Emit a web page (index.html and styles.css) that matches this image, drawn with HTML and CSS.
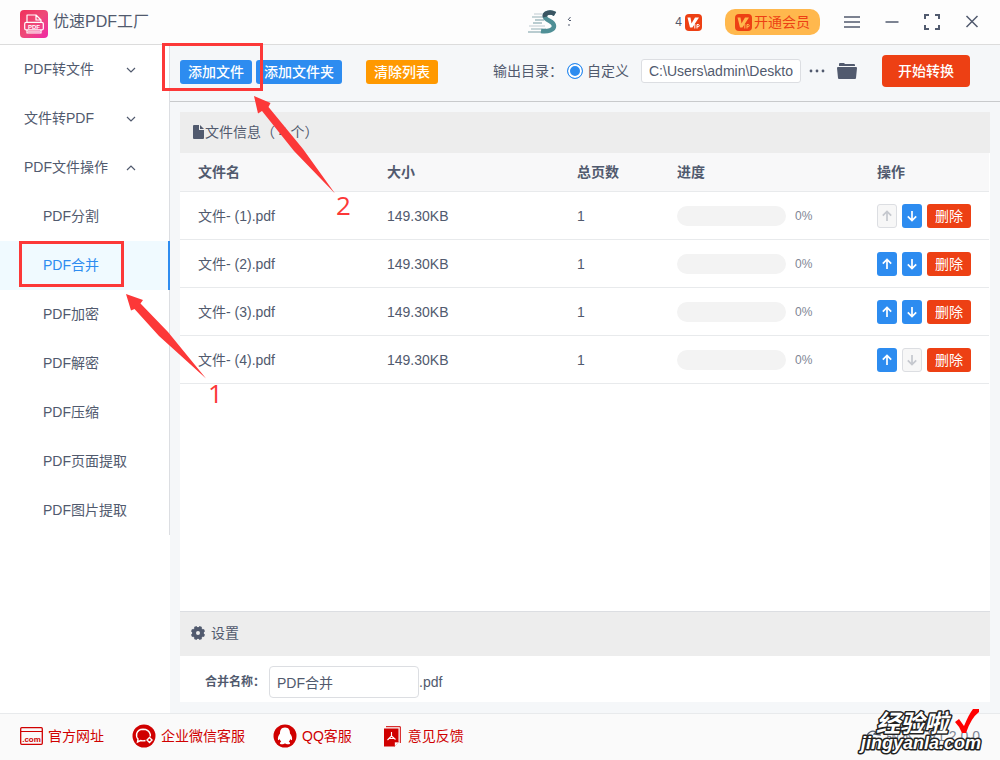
FILE: index.html
```html
<!DOCTYPE html>
<html lang="zh-CN">
<head>
<meta charset="utf-8">
<meta name="viewport" content="width=device-width, initial-scale=1">
<title>优速PDF工厂</title>
<link rel="stylesheet" href="styles.css">
</head>
<body>
<svg class="defs" aria-hidden="true">
  <symbol id="up" viewBox="0 0 12 12"><path d="M6 11V1.5M1.8 5.6L6 1.4l4.2 4.2" fill="none" stroke="currentColor" stroke-width="1.7"/></symbol>
  <symbol id="down" viewBox="0 0 12 12"><path d="M6 1v9.5M1.8 6.4L6 10.6l4.2-4.2" fill="none" stroke="currentColor" stroke-width="1.7"/></symbol>
  <symbol id="chev" viewBox="0 0 10 10"><path d="M1 3l4 4 4-4" fill="none" stroke="currentColor" stroke-width="1.2"/></symbol>
  <symbol id="vip" viewBox="0 0 17 17"><rect width="17" height="17" rx="4" fill="#ed4014"/><path d="M2.500 3.500h3l1 6 3.500-6h4L7.400 13.600H5z" fill="currentColor"/><path d="M9.800 10v4.500M12 14.500V10.500h1.200a1 1 0 0 1 0 2.200H12" fill="none" stroke="currentColor" stroke-width="1"/></symbol>
</svg>
<div class="app">
  <header class="titlebar">
    <svg class="logo" viewBox="0 0 28 28">
      <defs><linearGradient id="lg" x1="0" y1="0" x2="1" y2="1"><stop offset="0" stop-color="#f0305a"/><stop offset=".5" stop-color="#ee4a78"/><stop offset="1" stop-color="#f028a8"/></linearGradient></defs>
      <rect width="28" height="28" rx="4" fill="url(#lg)"/>
      <g fill="none" stroke="#fff" stroke-width="1.2" stroke-linejoin="round"><path d="M7 12V5h9l5 5v2M16 5v5h5"/><rect x="4.700" y="12.300" width="18.600" height="7.600" rx="1.500"/><path d="M7 20v3h14v-3"/><path d="M8 21.700h12" stroke-opacity=".7"/></g>
      <text x="14" y="18.500" class="logo-text">PDF</text>
    </svg>
    <h1 class="app-name">优速PDF工厂</h1>
    <div class="user">
      <svg class="avatar" viewBox="0 0 30 26">
        <g stroke-width="1.500"><path d="M6 5h12M1 17h16" stroke="#d3dce0"/><path d="M4 8h12M3 20h15" stroke="#b7c9cd"/><path d="M7 11h9M5 14h9M0 23h20" stroke="#a3bcc1"/></g>
        <path d="M27 5c-5-3-11-1-10 3 1 4 9 4 9 9 0 4-6 6-13 5" fill="none" stroke="#4f8f96" stroke-width="4.500"/>
        <path d="M27 5c-5-3-11-1-10 3" fill="none" stroke="#3a5562" stroke-width="4.500"/>
      </svg>
      <svg class="name-mark" viewBox="0 0 4 12"><path d="M3.500 1L1 4M2 4.500h2M2 8v2" stroke="#515a6e" fill="none"/></svg>
      <span class="user-end">4</span>
      <svg class="vip white"><use href="#vip"/></svg>
    </div>
    <button class="member"><svg class="vip"><use href="#vip"/></svg>开通会员</button>
    <div class="window-tools">
      <button class="tool" aria-label="菜单"><svg viewBox="0 0 16 16"><path d="M0 3h16M0 8h16M0 13h16"/></svg></button>
      <button class="tool" aria-label="最小化"><svg viewBox="0 0 16 16"><path d="M1.500 8h13"/></svg></button>
      <button class="tool" aria-label="最大化"><svg class="thick" viewBox="0 0 16 16"><path d="M1 5V1h4M11 1h4v4M15 11v4h-4M5 15H1v-4"/></svg></button>
      <button class="tool" aria-label="关闭"><svg viewBox="0 0 16 16"><path d="M2.500 2l11 11M13.500 2l-11 11"/></svg></button>
    </div>
  </header>

  <div class="main">
    <nav class="side">
      <div class="menu">
        <a href="#" class="group">PDF转文件<svg><use href="#chev"/></svg></a>
        <a href="#" class="group">文件转PDF<svg><use href="#chev"/></svg></a>
        <a href="#" class="group open">PDF文件操作<svg><use href="#chev"/></svg></a>
        <a href="#" class="item">PDF分割</a>
        <a href="#" class="item active">PDF合并</a>
        <a href="#" class="item">PDF加密</a>
        <a href="#" class="item">PDF解密</a>
        <a href="#" class="item">PDF压缩</a>
        <a href="#" class="item">PDF页面提取</a>
        <a href="#" class="item">PDF图片提取</a>
      </div>
    </nav>

    <main class="work">
      <div class="toolbar">
        <div class="actions">
          <button class="btn blue">添加文件</button>
          <button class="btn blue">添加文件夹</button>
          <button class="btn orange">清除列表</button>
        </div>
        <div class="output">
          <span>输出目录：</span>
          <label class="custom"><input type="radio" name="out" checked>自定义</label>
          <input class="path" type="text" aria-label="输出目录" value="C:\Users\admin\Deskto">
          <button class="tool dots" aria-label="更多"><svg viewBox="0 0 16 16"><circle cx="2" cy="8" r="1.400"/><circle cx="8" cy="8" r="1.400"/><circle cx="14" cy="8" r="1.400"/></svg></button>
          <button class="tool folder" aria-label="打开文件夹"><svg viewBox="0 0 20 18"><path d="M2 4V2q0-1 1-1h4l1 1h9q1 0 1 1v1z"/><path d="M1 5h18q1 0 1 1l-1 10q0 1-1 1H2q-1 0-1-1L0 6q0-1 1-1z"/></svg></button>
        </div>
        <button class="start">开始转换</button>
      </div>

      <div class="panel">
        <h2 class="panel-title"><svg viewBox="0 0 11 14"><path d="M1 0h5v5h5v8q0 1-1 1H1q-1 0-1-1V1q0-1 1-1z"/><path d="M7 0l4 4H7z"/></svg>文件信息（ 4 个）</h2>
        <div class="list">
          <table>
            <colgroup><col class="c-name"><col class="c-size"><col class="c-pages"><col class="c-progress"><col></colgroup>
            <thead><tr><th>文件名</th><th>大小</th><th>总页数</th><th>进度</th><th>操作</th></tr></thead>
            <tbody>
              <tr><td>文件- (1).pdf</td><td>149.30KB</td><td>1</td><td><div class="progress"><span class="bar"></span>0%</div></td><td><div class="ops"><button class="move" disabled aria-label="上移"><svg><use href="#up"/></svg></button><button class="move" aria-label="下移"><svg><use href="#down"/></svg></button><button class="del">删除</button></div></td></tr>
              <tr><td>文件- (2).pdf</td><td>149.30KB</td><td>1</td><td><div class="progress"><span class="bar"></span>0%</div></td><td><div class="ops"><button class="move" aria-label="上移"><svg><use href="#up"/></svg></button><button class="move" aria-label="下移"><svg><use href="#down"/></svg></button><button class="del">删除</button></div></td></tr>
              <tr><td>文件- (3).pdf</td><td>149.30KB</td><td>1</td><td><div class="progress"><span class="bar"></span>0%</div></td><td><div class="ops"><button class="move" aria-label="上移"><svg><use href="#up"/></svg></button><button class="move" aria-label="下移"><svg><use href="#down"/></svg></button><button class="del">删除</button></div></td></tr>
              <tr><td>文件- (4).pdf</td><td>149.30KB</td><td>1</td><td><div class="progress"><span class="bar"></span>0%</div></td><td><div class="ops"><button class="move" aria-label="上移"><svg><use href="#up"/></svg></button><button class="move" disabled aria-label="下移"><svg><use href="#down"/></svg></button><button class="del">删除</button></div></td></tr>
            </tbody>
          </table>
        </div>
        <h2 class="panel-title settings"><svg viewBox="0 0 16 16"><circle cx="8" cy="8" r="4" fill="none" stroke="#515a6e" stroke-width="4"/><path d="M8 8m-2.700-6.500L6.300 4M10.700 1.500L9.700 4M14.500 5.300L12 6.300M14.500 10.700L12 9.700M10.700 14.500L9.700 12M5.300 14.500L6.300 12M1.500 10.700L4 9.700M1.500 5.300L4 6.300" fill="none" stroke="#515a6e" stroke-width="2.800"/></svg>设置</h2>
        <div class="form">
          <label for="merge">合并名称：</label>
          <input id="merge" type="text" value="PDF合并"><span>.pdf</span>
        </div>
      </div>
    </main>
  </div>

  <footer class="foot">
    <a href="#" class="site"><svg viewBox="0 0 23 18"><rect x=".700" y=".700" width="21.600" height="16.600" rx="1" fill="none" stroke="#d00000" stroke-width="1.300"/><path d="M1 4.500h21" stroke="#d00000"/><text x="11.500" y="14.500" class="com">.com</text></svg>官方网址</a>
    <a href="#" class="wechat"><svg viewBox="0 0 24 24"><circle cx="12" cy="12" r="11.500" fill="#d00000"/><g fill="none" stroke="#fff" stroke-width="1.400"><path d="M13.500 16.500q-2.500.800-5 0L5.500 18l.500-3Q4 13 4.700 9.500 6 5.500 11 5.300q6 0 7.300 5.200v2"/><path d="M17.500 13.500l2.500 2.500-2.500 2.500-2.500-2.500z"/></g></svg>企业微信客服</a>
    <a href="#" class="qq"><svg viewBox="0 0 24 24"><circle cx="12" cy="12" r="11.500" fill="#d00000"/><path d="M12 3.500c-4 0-5 3-5 6-1.500 2-2.500 4-2 6.500.600.500 1.200-.300 1.700-1 .300 1 .800 2 1.500 2.700-1 .500-1.500 1-1.200 2 1.500 1 4 .500 5-.500 1 1 3.500 1.500 5 .500.300-1-.200-1.500-1.200-2 .700-.700 1.200-1.700 1.500-2.700.500.700 1.100 1.500 1.700 1 .500-2.500-.500-4.500-2-6.500 0-3-1-6-5-6z" fill="#fff"/></svg>QQ客服</a>
    <a href="#" class="feedback"><svg viewBox="0 0 17 21"><path d="M2 .700h14.300V17" fill="none" stroke="#d00000"/><path d="M0 2.500h14.500V16l-4 4.500H0z" fill="#d00000"/><path d="M10.500 20.500V16h4" fill="#fff" stroke="#d00000" stroke-width=".700"/><path d="M7.500 6v4L3.500 14M7.500 10l4 3.500M5 12.500h5" fill="none" stroke="#fff" stroke-width="1.100"/></svg>意见反馈</a>
    <span class="version"><svg viewBox="0 0 16 16"><path d="M1 9a6 6 0 0 1 9-5l-2 2 6 1-1-6-2 2" fill="none" stroke="#515a6e" stroke-width="1.300"/></svg>版本：V1.2.0.0</span>
  </footer>
</div>

<svg class="overlay annotations" width="400" height="420" aria-hidden="true">
  <g fill="none" stroke="#fc3838" stroke-width="3"><rect x="163.500" y="44.500" width="98" height="45"/><rect x="20.500" y="242.500" width="102" height="43"/></g>
  <path d="M254 96l16.500 7-2 4L303 149l32 44.500L294 151 262 111l-4 2.500zM126 294l17 6-2.500 3.500L168 332l38 46.500L159 336 134.500 309l-3.500 1.500z" fill="#fc3838"/>
  <text x="336" y="215">2</text><text x="208" y="403">1</text>
</svg>
<svg class="overlay watermark" width="136" height="56" viewBox="0 0 136 56" aria-hidden="true">
  <text class="cn" x="16" y="28">经验啦</text>
  <text class="domain" x="1" y="45">jingyanla.com</text>
  <path d="M95 18l4-3 5 7q5-12 9-17h6v3q-8 6-13 21h-4q-2-6-7-11z" fill="#f00"/>
</svg>
</body>
</html>
```
FILE: styles.css
```css
* { box-sizing: border-box; }
body {
  margin: 0;
  font: 14px/20px "Liberation Sans", "Noto Sans CJK SC", sans-serif;
  color: #515a6e;
  background: #fff;
}
button, input { font: inherit; color: inherit; }
button { border: 0; padding: 0; background: none; cursor: pointer; }
a { color: inherit; text-decoration: none; }
h1, h2 { margin: 0; font-weight: 400; }
svg { flex: none; display: block; }
.defs { position: absolute; width: 0; height: 0; }
.app { display: flex; flex-direction: column; min-height: 100vh; }

.titlebar {
  display: flex;
  align-items: center;
  height: 45px;
  padding: 0 20px;
  background: #fdfdfd;
  border-bottom: 1px solid #dcdcdc;
}
.logo { width: 28px; height: 28px; margin-top: 3px; }
.logo-text { font: bold 6px "Liberation Sans", sans-serif; fill: #fff; text-anchor: middle; }
.app-name { margin-left: 5px; font-size: 16px; }
.user { display: flex; align-items: center; margin-left: auto; }
.avatar { width: 30px; height: 26px; }
.name-mark { width: 4px; height: 12px; margin-left: 9px; }
.user-end { margin-left: 104px; font-size: 12px; }
.vip { width: 17px; height: 17px; color: #ffb84d; }
.vip.white { color: #fff; margin-left: 3px; }
.member {
  display: flex;
  align-items: center;
  justify-content: center;
  gap: 2px;
  width: 95px;
  height: 26px;
  margin-left: 23px;
  border-radius: 10px;
  background: #ffb84d;
  color: #ed4014;
}
.window-tools { display: flex; gap: 24px; margin-left: 24px; }
.tool svg { width: 16px; height: 16px; fill: none; stroke: #515a6e; stroke-width: 1.5; }
.tool .thick { stroke-width: 2; }

.main { display: flex; flex: 1; }
.side { width: 170px; flex: none; background: #fff; }
.menu { border-right: 1px solid #dcdee2; }
.group, .item { display: flex; align-items: center; height: 49px; padding-bottom: 2px; }
.group { justify-content: space-between; padding-left: 24px; padding-right: 33px; }
.group svg { width: 10px; height: 10px; margin-top: 2px; }
.group.open svg { transform: rotate(180deg); }
.item { padding-left: 43px; }
.item.active {
  margin-right: -1px;
  border-right: 2px solid #2d8cf0;
  background: #f0faff;
  color: #2d8cf0;
}

.work { display: flex; flex-direction: column; flex: 1; min-width: 0; background: #f5f7f9; }
.toolbar {
  display: flex;
  align-items: center;
  height: 57px;
  padding: 0 30px 4px 10px;
  border-bottom: 1px solid #c8cacc;
}
.actions { display: flex; gap: 4px; padding-top: 2px; }
.btn { height: 24px; padding: 0 8px; border-radius: 3px; color: #fff; font-weight: 500; }
.blue { background: #2d8cf0; }
.orange { background: #f90; margin-left: 20px; }
.output { display: flex; align-items: center; margin-left: auto; }
.custom { display: flex; align-items: center; gap: 4px; margin-left: 4px; }
.custom input {
  appearance: none;
  width: 16px;
  height: 16px;
  margin: 0;
  border: 1px solid #2d8cf0;
  border-radius: 50%;
  background: #2d8cf0;
  box-shadow: inset 0 0 0 2px #fff;
}
.path {
  width: 160px;
  height: 24px;
  margin-left: 12px;
  padding: 0 7px;
  border: 1px solid #dcdee2;
  border-radius: 3px;
  background: #fff;
}
.dots { margin-left: 8px; }
.dots svg, .folder svg { fill: #515a6e; stroke: none; }
.folder { margin-left: 12px; }
.folder svg { width: 20px; height: 18px; }
.start {
  width: 88px;
  height: 32px;
  margin-left: 25px;
  border-radius: 4px;
  background: #ed4014;
  color: #fff;
  font-weight: 500;
}

.panel { display: flex; flex-direction: column; flex: 1; margin: 10px 10px 11px; background: #fff; }
.panel-title {
  display: flex;
  align-items: center;
  gap: 1px;
  height: 41px;
  padding: 0 0 2px 13px;
  background: #ededed;
  font-size: 14px;
  white-space: pre;
}
.panel-title svg { width: 11px; height: 14px; fill: #515a6e; }
.list { flex: 1; padding-right: 1px; }
table { width: 100%; border-spacing: 0; table-layout: fixed; }
.c-name { width: 189px; }
.c-size { width: 190px; }
.c-pages { width: 100px; }
.c-progress { width: 200px; }
th, td { padding: 0 0 0 18px; text-align: left; border-bottom: 1px solid #e8eaec; }
th { height: 39px; background: #f8f8f9; font-weight: 700; }
td { height: 48px; }
.progress { display: flex; align-items: center; gap: 9px; font-size: 12px; color: #808695; }
.bar { width: 109px; height: 20px; border-radius: 10px; background: #f3f3f3; }
.ops { display: flex; gap: 5px; }
.move {
  display: grid;
  place-items: center;
  width: 20px;
  height: 24px;
  border-radius: 3px;
  background: #2d8cf0;
  color: #fff;
}
.move svg { width: 12px; height: 12px; }
.move:disabled { border: 1px solid #dcdee2; background: #f7f7f7; color: #c5c8ce; }
.del { width: 44px; height: 24px; border-radius: 3px; background: #ed4014; color: #fff; }
.panel .settings { height: 45px; gap: 5px; padding-left: 10px; border-top: 1px solid #dcdee2; }
.settings svg { width: 16px; height: 16px; }
.form { display: flex; align-items: center; padding: 10px 0 4px 25px; }
.form label { width: 64px; font-size: 12px; font-weight: 700; }
.form input {
  width: 150px;
  height: 32px;
  padding: 0 7px;
  border: 1px solid #dcdee2;
  border-radius: 4px;
}

.foot {
  display: flex;
  align-items: center;
  height: 47px;
  padding: 0 20px 2px;
  border-top: 1px solid #e8eaec;
  background: #fafafa;
  color: #d00000;
}
.foot a { display: flex; align-items: center; gap: 5px; margin-right: 28px; }
.site svg { width: 23px; height: 18px; }
.com { font: bold 8px "Liberation Sans", sans-serif; fill: #d00000; text-anchor: middle; }
.wechat svg, .qq svg { width: 24px; height: 24px; }
.foot .qq { margin-right: 32px; }
.foot .feedback { gap: 7px; }
.feedback svg { width: 17px; height: 21px; }
.version { display: flex; align-items: center; gap: 4px; margin-left: auto; color: #808695; }
.version svg { width: 16px; height: 16px; }

.overlay { position: absolute; pointer-events: none; }
.annotations { left: 0; top: 0; font-size: 26px; font-family: "Open Sans", sans-serif; fill: #fc3838; }
.watermark {
  right: 4px;
  top: 704px;
  overflow: visible;
  fill: #fff;
  stroke: #222;
  stroke-linejoin: round;
  paint-order: stroke;
}
.watermark path { stroke: none; }
.cn { font: italic 700 24px "Noto Sans CJK SC", sans-serif; stroke-width: 3px; }
.domain { font: italic 700 18px "Liberation Sans", sans-serif; stroke-width: 3px; }
```
